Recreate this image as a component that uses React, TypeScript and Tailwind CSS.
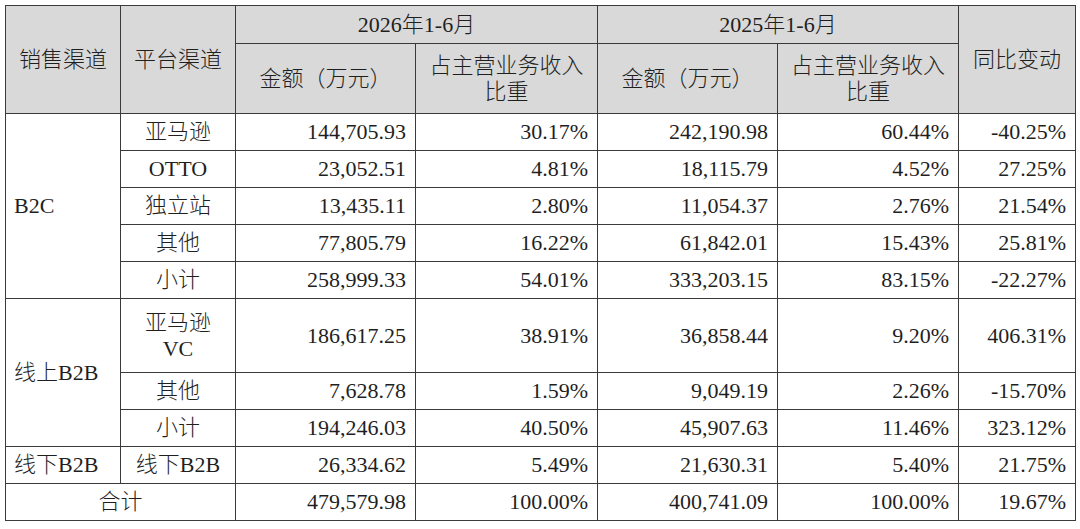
import React from 'react';

type Row = {
  channel?: { label: string; span: number };
  platform: React.ReactNode;
  amt26: string;
  pct26: string;
  amt25: string;
  pct25: string;
  yoy: string;
  tall?: boolean;
};

const rows: Row[] = [
  { channel: { label: 'B2C', span: 5 }, platform: '亚马逊', amt26: '144,705.93', pct26: '30.17%', amt25: '242,190.98', pct25: '60.44%', yoy: '-40.25%' },
  { platform: 'OTTO', amt26: '23,052.51', pct26: '4.81%', amt25: '18,115.79', pct25: '4.52%', yoy: '27.25%' },
  { platform: '独立站', amt26: '13,435.11', pct26: '2.80%', amt25: '11,054.37', pct25: '2.76%', yoy: '21.54%' },
  { platform: '其他', amt26: '77,805.79', pct26: '16.22%', amt25: '61,842.01', pct25: '15.43%', yoy: '25.81%' },
  { platform: '小计', amt26: '258,999.33', pct26: '54.01%', amt25: '333,203.15', pct25: '83.15%', yoy: '-22.27%' },
  {
    channel: { label: '线上B2B', span: 3 },
    platform: (
      <>
        亚马逊
        <br />
        VC
      </>
    ),
    amt26: '186,617.25',
    pct26: '38.91%',
    amt25: '36,858.44',
    pct25: '9.20%',
    yoy: '406.31%',
    tall: true,
  },
  { platform: '其他', amt26: '7,628.78', pct26: '1.59%', amt25: '9,049.19', pct25: '2.26%', yoy: '-15.70%' },
  { platform: '小计', amt26: '194,246.03', pct26: '40.50%', amt25: '45,907.63', pct25: '11.46%', yoy: '323.12%' },
  { channel: { label: '线下B2B', span: 1 }, platform: '线下B2B', amt26: '26,334.62', pct26: '5.49%', amt25: '21,630.31', pct25: '5.40%', yoy: '21.75%' },
];

const cell = 'border border-[#3a3a3a] p-0 leading-[26px]';
const num = `${cell} text-right pr-[9px]`;
const head = `${cell} bg-[#d9d9d9] text-center font-light`;

export default function App() {
  return (
    <div className="w-[1080px] h-[529px] bg-white pt-[5px] pl-[5px]">
      <table
        className="table-fixed border-collapse w-[1070px] text-[22px] font-light text-[#1f1f1f]"
        style={{ fontFamily: '"Liberation Serif", "Noto Sans CJK SC", serif' }}
      >
        <colgroup>
          <col className="w-[115px]" />
          <col className="w-[115px]" />
          <col className="w-[180px]" />
          <col className="w-[182px]" />
          <col className="w-[180px]" />
          <col className="w-[181px]" />
          <col className="w-[117px]" />
        </colgroup>
        <thead>
          <tr className="h-[38px]">
            <th rowSpan={2} className={head}>销售渠道</th>
            <th rowSpan={2} className={head}>平台渠道</th>
            <th colSpan={2} className={head}>2026年1-6月</th>
            <th colSpan={2} className={head}>2025年1-6月</th>
            <th rowSpan={2} className={head}>同比变动</th>
          </tr>
          <tr className="h-[70px]">
            <th className={head}>金额（万元）</th>
            <th className={head}>
              占主营业务收入
              <br />
              比重
            </th>
            <th className={head}>金额（万元）</th>
            <th className={head}>
              占主营业务收入
              <br />
              比重
            </th>
          </tr>
        </thead>
        <tbody>
          {rows.map((r, i) => (
            <tr key={i} className={r.tall ? 'h-[74px]' : 'h-[37px]'}>
              {r.channel && (
                <td rowSpan={r.channel.span} className={`${cell} text-left pl-[8px]`}>
                  {r.channel.label}
                </td>
              )}
              <td className={`${cell} text-center`}>{r.platform}</td>
              <td className={num}>{r.amt26}</td>
              <td className={num}>{r.pct26}</td>
              <td className={num}>{r.amt25}</td>
              <td className={num}>{r.pct25}</td>
              <td className={num}>{r.yoy}</td>
            </tr>
          ))}
          <tr className="h-[37px]">
            <td colSpan={2} className={`${cell} text-center`}>合计</td>
            <td className={num}>479,579.98</td>
            <td className={num}>100.00%</td>
            <td className={num}>400,741.09</td>
            <td className={num}>100.00%</td>
            <td className={num}>19.67%</td>
          </tr>
        </tbody>
      </table>
    </div>
  );
}
